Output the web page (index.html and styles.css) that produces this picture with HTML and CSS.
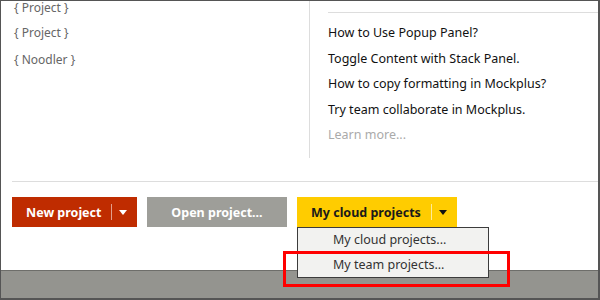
FILE: index.html
```html
<!DOCTYPE html>
<html>
<head>
<meta charset="utf-8">
<link rel="stylesheet" href="styles.css">
</head>
<body>
<div class="frame">
  <div class="main">
    <div class="top">
      <ul class="left">
        <li class="l1">{ Project }</li>
        <li class="l2">{ Project }</li>
        <li class="l3">{ Noodler }</li>
      </ul>
      <div class="right">
        <div class="rule"></div>
        <ul class="links">
          <li>How to Use Popup Panel?</li>
          <li>Toggle Content with Stack Panel.</li>
          <li>How to copy formatting in Mockplus?</li>
          <li>Try team collaborate in Mockplus.</li>
          <li class="more">Learn more...</li>
        </ul>
      </div>
    </div>
    <div class="sep"></div>
    <div class="actions">
      <div class="btn btn-new"><span class="label">New project</span><span class="div"></span><span class="caret"></span></div>
      <div class="btn btn-open"><span class="label">Open project...</span></div>
      <div class="btn btn-cloud"><span class="label">My cloud projects</span><span class="div"></span><span class="caret"></span></div>
    </div>
  </div>
  <div class="footer"></div>
  <ul class="menu">
    <li>My cloud projects...</li>
    <li class="second">My team projects...</li>
  </ul>
  <div class="highlight"></div>
</div>
</body>
</html>
```
FILE: styles.css
```css
* { box-sizing: border-box; }
html, body { margin: 0; padding: 0; background: #fff; }
body { font-family: "Noto Sans", "Open Sans", sans-serif; }
ul { list-style: none; margin: 0; padding: 0; }

.frame {
  position: relative;
  width: 600px;
  height: 300px;
  border: 1px solid #555;
  border-right-width: 2px;
  border-bottom-width: 2px;
  display: flex;
  flex-direction: column;
  overflow: hidden;
}
.main { flex: 1; display: flex; flex-direction: column; }
.top { display: flex; height: 157px; }
.left {
  width: 308px;
  padding-left: 13px;
  font-size: 12px;
  color: #666;
}
.left li { line-height: 14px; }
.l2 { margin-top: 11px; }
.l3 { margin-top: 13px; }

.right {
  flex: 1;
  border-left: 1px solid #ddd;
  padding-left: 18px;
}
.rule { margin-top: 11px; height: 1px; background: #ddd; }
.links { padding-top: 7px; font-size: 12.5px; color: #111; }
.links li { line-height: 25.6px; }
.links .more { color: #aaa; }

.sep { margin: 23px 0 0 11px; height: 1px; background: #ddd; }

.actions {
  display: flex;
  gap: 10px;
  margin-top: 15px;
  padding-left: 11px;
}
.btn {
  height: 30px;
  display: flex;
  align-items: center;
  font-size: 12.5px;
  font-weight: bold;
  padding-left: 14px;
}
.btn-new { width: 125px; background: #bf2c00; color: #fff; }
.btn-open { width: 140px; background: #9e9e99; color: #fff; justify-content: center; padding-left: 0; }
.btn-cloud { width: 160px; background: #ffcc00; color: #1a1a1a; }
.btn .div { width: 1px; height: 16px; margin-left: auto; }
.btn-new .div { background: rgba(255,255,255,0.55); }
.btn-cloud .div { background: rgba(255,255,255,0.6); }
.caret {
  width: 0; height: 0;
  border-left: 4px solid transparent;
  border-right: 4px solid transparent;
  margin: 0 10px 0 7px;
}
.btn-new .caret { border-top: 5px solid #fff; }
.btn-cloud .caret { border-top: 5px solid #111; }

.footer {
  height: 28px;
  background: #94948f;
  border-top: 1px solid #6e6e6a;
}

.menu {
  position: absolute;
  left: 296px;
  top: 226px;
  width: 192px;
  height: 51px;
  background: #f2f2f0;
  border: 1px solid #3c3c3c;
  font-size: 12.5px;
  color: #333;
}
.menu li { height: 24px; line-height: 24px; padding-left: 35px; }
.menu .second { border-top: 1px solid #ccc; }

.highlight {
  position: absolute;
  left: 282px;
  top: 250px;
  width: 227px;
  height: 36px;
  border: 3px solid #ff0000;
}
```
